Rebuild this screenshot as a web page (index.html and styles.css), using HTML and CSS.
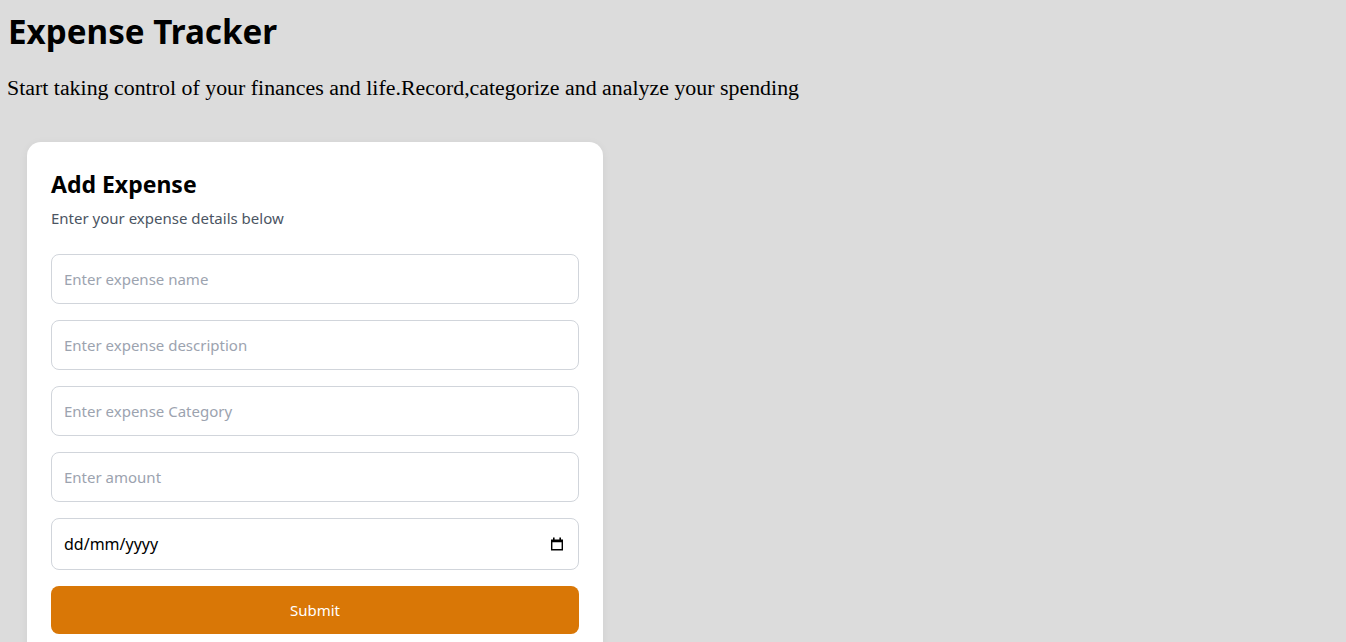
FILE: index.html
```html
<!DOCTYPE html>
<html lang="en">
<head>
<meta charset="utf-8">
<title>Expense Tracker</title>
<link rel="stylesheet" href="styles.css">
</head>
<body>
  <header class="page-head">
    <h1 class="title">Expense Tracker</h1>
    <p class="tagline">Start taking control of your finances and life.Record,categorize and analyze your spending</p>
  </header>
  <main class="main">
    <section class="card">
      <h2 class="card-title">Add Expense</h2>
      <p class="card-sub">Enter your expense details below</p>
      <form class="form">
        <input class="field" type="text" placeholder="Enter expense name">
        <input class="field" type="text" placeholder="Enter expense description">
        <input class="field" type="text" placeholder="Enter expense Category">
        <input class="field" type="text" placeholder="Enter amount">
        <label class="field date-field">
          <input class="date-input" type="text" placeholder="dd/mm/yyyy">
          <svg class="cal" width="14" height="14" viewBox="0 0 14 14" aria-hidden="true">
            <rect x="3" y="0.5" width="1.6" height="2.5" fill="#000"/>
            <rect x="9.4" y="0.5" width="1.6" height="2.5" fill="#000"/>
            <path d="M1 2.5h12v11H1z M2.4 5.2v6.9h9.2V5.2z" fill="#000" fill-rule="evenodd"/>
          </svg>
        </label>
        <button class="submit" type="button">Submit</button>
      </form>
    </section>
  </main>
</body>
</html>
```
FILE: styles.css
```css
* { box-sizing: border-box; }

html, body { height: 100%; }

body {
  margin: 0;
  padding: 8px;
  background: #dcdcdc;
  overflow: hidden;
}

.title {
  margin: 0;
  font-family: "Noto Sans", "Open Sans", sans-serif;
  font-weight: 700;
  font-size: 33.2px;
  line-height: 48px;
  color: #000;
}

.tagline {
  margin: 19px 0 0 -1px;
  font-family: "Liberation Serif", serif;
  font-size: 21.9px;
  line-height: 26px;
  color: #000;
}

.main {
  padding: 41px 0 0 19px;
}

.card {
  width: 576px;
  background: #fff;
  border-radius: 14px;
  padding: 26px 24px 24px;
  box-shadow: 0 2px 10px rgba(0, 0, 0, 0.06);
  font-family: "Noto Sans", "Open Sans", sans-serif;
}

.card-title {
  margin: 0;
  font-size: 23px;
  line-height: 32px;
  font-weight: 700;
  color: #000;
}

.card-sub {
  margin: 8px 0 0;
  font-size: 15px;
  line-height: 20px;
  color: #4b5563;
}

.form {
  margin-top: 26px;
  display: flex;
  flex-direction: column;
  gap: 16px;
}

.field {
  display: block;
  width: 100%;
  height: 50px;
  padding: 0 12px;
  border: 1px solid #d1d5db;
  border-radius: 8px;
  background: #fff;
  font-family: "Noto Sans", "Open Sans", sans-serif;
  font-size: 15px;
  color: #111;
  outline: none;
}

.field::placeholder { color: #9ca3af; }

.date-field {
  height: 52px;
  display: flex;
  align-items: center;
  gap: 8px;
}

.date-input {
  flex: 1;
  min-width: 0;
  border: 0;
  padding: 0;
  outline: none;
  background: transparent;
  font-family: "Noto Sans", "Open Sans", sans-serif;
  font-size: 16px;
  color: #000;
}

.date-input::placeholder { color: #000; }

.cal { flex: none; margin-right: 2px; }

.submit {
  height: 48px;
  width: 100%;
  border: 0;
  border-radius: 8px;
  background: #d97706;
  color: #fff;
  font-family: "Noto Sans", "Open Sans", sans-serif;
  font-size: 15px;
}
```
